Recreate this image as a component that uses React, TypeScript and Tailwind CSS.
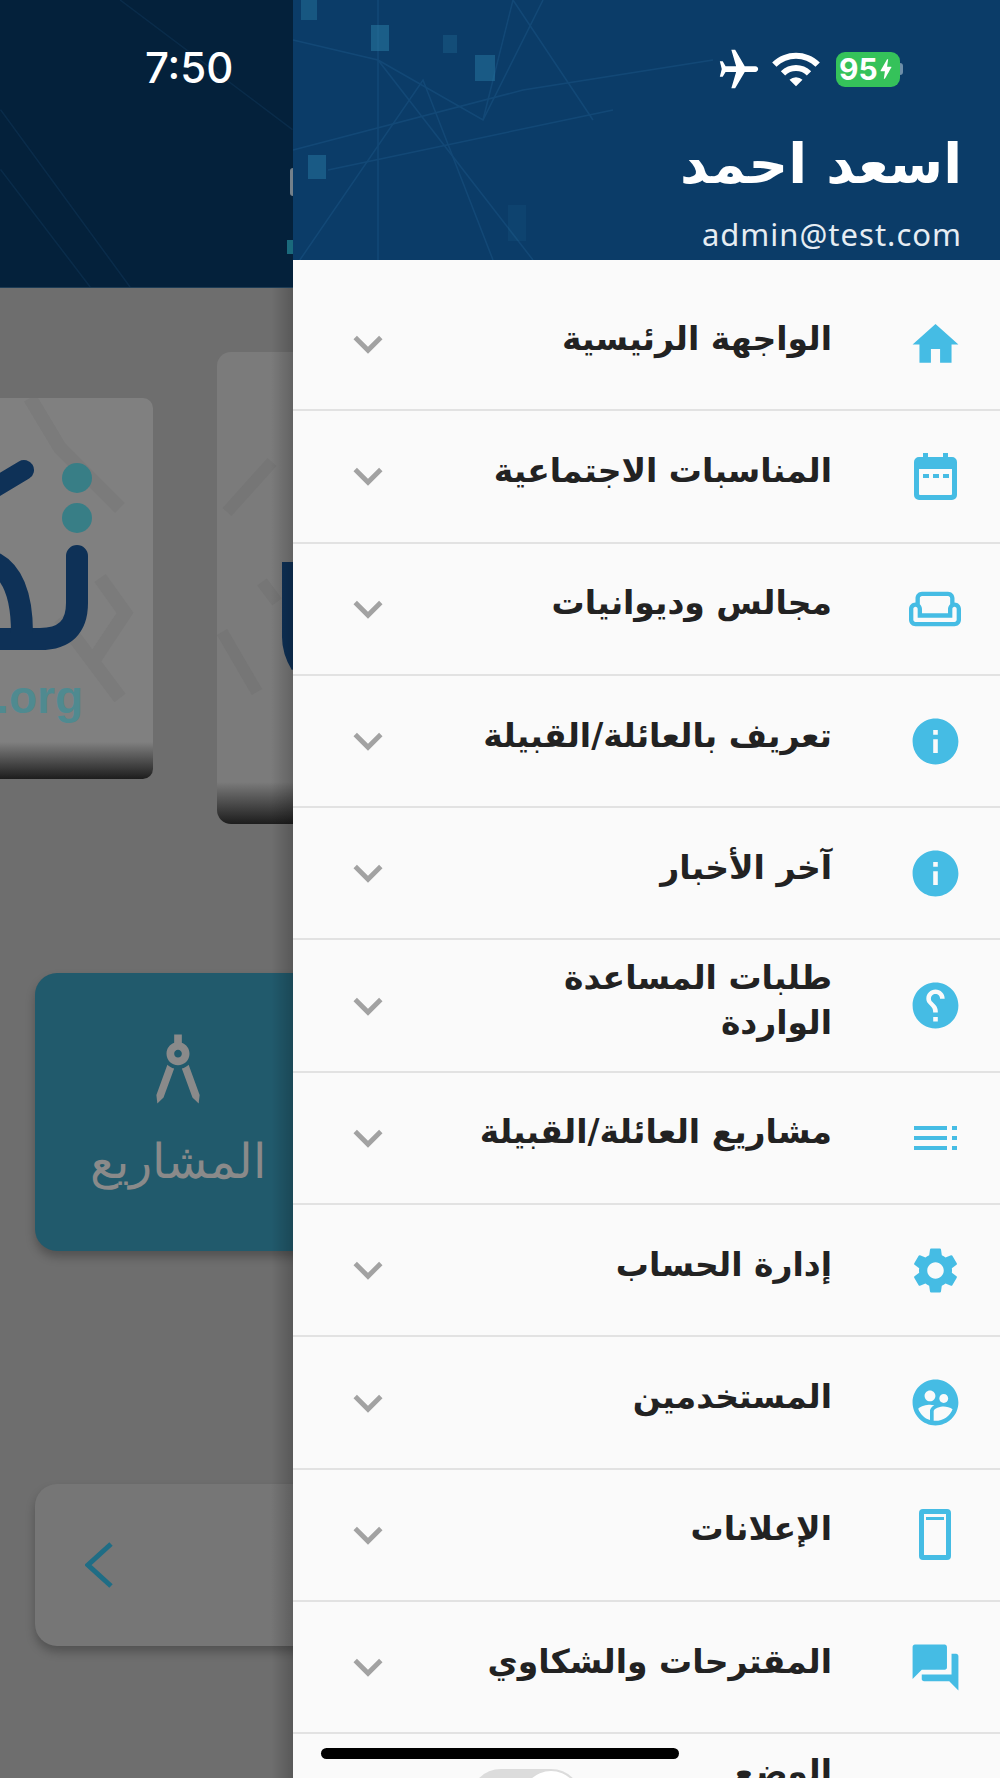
import type { ReactNode } from 'react';
import {
  MdHome,
  MdOutlineWeekend,
  MdInfo,
  MdHelp,
  MdSettings,
  MdSupervisedUserCircle,
  MdQuestionAnswer,
  MdArchitecture,
  MdAirplanemodeActive,
  MdWifi,
  MdBolt,
  MdKeyboardArrowDown,
} from 'react-icons/md';

function CalendarIcon() {
  return (
    <svg viewBox="0 0 43 47" className="w-[43px] h-[47px]" fill="#45bce4">
      <path fillRule="evenodd" d="M9 0h5v4h15V0h5v4h4a5 5 0 0 1 5 5v33a5 5 0 0 1-5 5H5a5 5 0 0 1-5-5V9a5 5 0 0 1 5-5h4zM5 16v25a1 1 0 0 0 1 1h31a1 1 0 0 0 1-1V16z" />
      <rect x="9" y="21" width="6" height="4" />
      <rect x="19" y="21" width="6" height="4" />
      <rect x="29" y="21" width="6" height="4" />
    </svg>
  );
}

function ListIcon() {
  return (
    <svg viewBox="0 0 43 24" className="w-[43px] h-[24px]" fill="#45bce4">
      <rect x="0" y="0" width="33" height="4" />
      <rect x="0" y="10" width="33" height="4" />
      <rect x="0" y="20" width="33" height="4" />
      <rect x="38" y="0" width="5" height="4" />
      <rect x="38" y="10" width="5" height="4" />
      <rect x="38" y="20" width="5" height="4" />
    </svg>
  );
}

function TabletIcon() {
  return (
    <svg viewBox="0 0 32 51" className="w-[32px] h-[51px]" fill="#45bce4">
      <path fillRule="evenodd" d="M4 0h24a4 4 0 0 1 4 4v43a4 4 0 0 1-4 4H4a4 4 0 0 1-4-4V4a4 4 0 0 1 4-4zM5 5v41h22V5z" />
      <rect x="7" y="8" width="18" height="3" />
    </svg>
  );
}

const ROWS: { label: string; icon: ReactNode }[] = [
  { label: 'الواجهة الرئيسية', icon: <MdHome size={55} color="#45bce4" /> },
  { label: 'المناسبات الاجتماعية', icon: <CalendarIcon /> },
  { label: 'مجالس وديوانيات', icon: <MdOutlineWeekend size={52} color="#45bce4" /> },
  { label: 'تعريف بالعائلة/القبيلة', icon: <MdInfo size={55} color="#45bce4" /> },
  { label: 'آخر الأخبار', icon: <MdInfo size={55} color="#45bce4" /> },
  { label: 'طلبات المساعدة\nالواردة', icon: <MdHelp size={55} color="#45bce4" className="-scale-x-100" /> },
  { label: 'مشاريع العائلة/القبيلة', icon: <ListIcon /> },
  { label: 'إدارة الحساب', icon: <MdSettings size={55} color="#45bce4" /> },
  { label: 'المستخدمين', icon: <MdSupervisedUserCircle size={55} color="#45bce4" /> },
  { label: 'الإعلانات', icon: <TabletIcon /> },
  { label: 'المقترحات والشكاوي', icon: <MdQuestionAnswer size={55} color="#45bce4" /> },
];

// network lines behind both headers
function HeaderPattern() {
  return (
    <svg viewBox="0 0 707 260" className="absolute inset-0 w-full h-full" fill="none">
      <g stroke="#2a6ea3" strokeWidth="1.5" opacity="0.25">
        <path d="M85 0 L85 260" />
        <path d="M0 40 L85 60 L190 120 L250 0" />
        <path d="M0 150 L230 90 L420 60" />
        <path d="M0 270 L130 80 L200 260" />
        <path d="M35 170 L320 110" />
        <path d="M85 60 L240 260" />
        <path d="M190 120 L220 0 L300 120" />
      </g>
      <g fill="#2b7fa8">
        <rect x="78" y="25" width="18" height="26" opacity="0.5" />
        <rect x="8" y="0" width="16" height="20" opacity="0.4" />
        <rect x="150" y="35" width="14" height="18" opacity="0.25" />
        <rect x="182" y="55" width="20" height="26" opacity="0.45" />
        <rect x="15" y="155" width="18" height="24" opacity="0.45" />
        <rect x="215" y="205" width="18" height="36" opacity="0.12" />
      </g>
    </svg>
  );
}

function LeftPanel() {
  return (
    <div className="relative w-[293px] shrink-0 h-full overflow-hidden bg-[#6e6e6e]">
      <div className="relative h-[288px] bg-[#04213b] border-b border-[#1d3c55] overflow-hidden">
        <svg viewBox="0 0 293 288" className="absolute inset-0 w-full h-full" fill="none">
          <path d="M0 110 L130 288 M0 170 L90 288 M120 0 L293 130" stroke="#0a2c4a" strokeWidth="1.5" />
        </svg>
        <span className="absolute left-[145px] top-[43px] text-[42px] leading-[50px] font-medium text-white font-['Inter',sans-serif]">7:50</span>
        <span className="absolute right-0 top-[168px] w-[3px] h-[28px] rounded-l-full bg-[#74808a]" />
        <span className="absolute right-0 top-[240px] w-[6px] h-[14px] bg-[#1a6a7c]" />
      </div>

      {/* carousel */}
      <div className="h-[600px] flex items-center gap-[64px]">
        <div className="relative shrink-0 w-[300px] h-[381px] -ml-[147px] rounded-[10px] overflow-hidden bg-[#808080]">
          <svg viewBox="0 0 153 381" className="absolute right-0 top-0 w-[153px] h-[381px]" fill="none">
            <path d="M30 0 L60 50 L120 110 M100 180 L125 215 L95 260 M60 220 L120 300" stroke="#7b7b7b" strokeWidth="14" />
            <circle cx="77" cy="80" r="15" fill="#387e86" />
            <circle cx="77" cy="120" r="15" fill="#387e86" />
            <path d="M-6 90 L24 72" stroke="#0e3157" strokeWidth="20" strokeLinecap="round" />
            <path d="M77 158 V205 Q77 241 40 241 H-10" stroke="#0e3157" strokeWidth="22" strokeLinecap="round" />
            <path d="M-5 165 Q22 180 22 235" stroke="#0e3157" strokeWidth="22" />
          </svg>
          <span className="absolute right-[70px] top-[273px] text-[46px] leading-[52px] font-bold text-[#4f8a90] font-['Liberation_Sans',sans-serif]">.org</span>
          <div className="absolute left-0 right-0 bottom-0 h-[37px] bg-gradient-to-b from-transparent to-[#1d1d1d]" />
        </div>
        <div className="relative shrink-0 w-[400px] h-[472px] rounded-[14px] overflow-hidden bg-[#7b7b7b]">
          <svg viewBox="0 0 76 472" className="absolute left-0 top-0 w-[76px] h-[472px]" fill="none">
            <path d="M10 160 L55 110 M5 280 L40 340 M60 250 L45 230" stroke="#767676" strokeWidth="12" />
            <path d="M71 210 V285 Q71 300 80 315" stroke="#0e3157" strokeWidth="12" />
          </svg>
          <div className="absolute left-0 right-0 bottom-0 h-[42px] bg-gradient-to-b from-transparent to-[#1d1d1d]" />
        </div>
      </div>

      <div className="h-[596px] pt-[85px] pl-[35px]">
        <div className="w-[286px] h-[278px] rounded-[22px] bg-[#215a6c] shadow-[0_6px_10px_rgba(0,0,0,0.25)] flex flex-col items-center pt-[50px]">
          <MdArchitecture size={92} color="#8a8a8a" />
          <span dir="rtl" className="mt-[14px] text-[48px] leading-[64px] text-[#8a8a8a] font-['DejaVu_Sans',sans-serif] font-light">المشاريع</span>
        </div>
        <div className="w-[286px] h-[162px] mt-[233px] rounded-[22px] bg-[#767676] shadow-[0_6px_10px_rgba(0,0,0,0.25)] flex items-center pl-[50px]">
          <svg viewBox="0 0 28 46" className="w-[28px] h-[46px]" fill="none">
            <path d="M26 2 L3 23 L26 44" stroke="#1f6d85" strokeWidth="5" />
          </svg>
        </div>
      </div>

      {/* drawer shadow */}
      <div className="absolute right-0 top-[288px] bottom-0 w-[22px] bg-gradient-to-r from-transparent to-black/20" />
    </div>
  );
}

function DrawerRow({ label, icon }: { label: string; icon: ReactNode }) {
  return (
    <div className="h-[132.3px] shrink-0 border-b-2 border-[#e2e2e2] flex items-center pr-[35px] pl-[46px]">
      <div className="w-[60px] shrink-0 flex items-center justify-center">{icon}</div>
      <div className="flex-1 pr-[73px] pl-[20px] -mt-[12px] text-[33px] leading-[45px] font-bold text-[#222] whitespace-pre-line">{label}</div>
      <MdKeyboardArrowDown size={58} color="#a2a2a2" className="shrink-0" />
    </div>
  );
}

export default function App() {
  return (
    <div className="relative flex w-[1000px] h-[1778px] overflow-hidden font-['DejaVu_Sans',sans-serif]">
      <LeftPanel />

      <div dir="rtl" className="flex-1 h-full flex flex-col bg-[#fafafa]">
        <div dir="ltr" className="relative h-[260px] shrink-0 bg-[#0b3c68] overflow-hidden">
          <HeaderPattern />
          <div className="absolute left-[423px] top-[43px] flex items-center">
            <MdAirplanemodeActive size={46} color="#fff" className="rotate-90" />
            <MdWifi size={52} color="#fff" className="ml-[8px]" />
            <div className="ml-[14px] w-[64px] h-[35px] rounded-[9px] bg-[#35c25a] flex items-center pl-[3px] text-[30px] leading-none font-bold text-white font-['Inter',sans-serif]">
              95
              <MdBolt size={26} color="#fff" className="-ml-[5px] shrink-0" />
            </div>
            <span className="w-[3px] h-[12px] rounded-r-full bg-[#6d8ea8]" />
          </div>
          <div className="absolute right-[38px] top-[130px] text-right">
            <div dir="rtl" className="text-[55px] leading-[68px] font-bold text-white">اسعد احمد</div>
            <div className="mt-[18px] text-[31px] leading-[36px] tracking-[1px] text-[#e6edf3] font-['Noto_Sans',sans-serif]">admin@test.com</div>
          </div>
        </div>

        <div className="pt-[19px] flex flex-col">
          {ROWS.map((row, i) => (
            <DrawerRow key={i} label={row.label} icon={row.icon} />
          ))}
          <div className="h-[132.3px] shrink-0 flex items-center pr-[35px] pl-[177px]">
            <div className="w-[60px] shrink-0" />
            <div className="flex-1 pr-[73px] -mt-[12px] text-[33px] leading-[45px] font-bold text-[#222] whitespace-pre-line">{'الوضع\nالليلي'}</div>
            <div dir="ltr" className="w-[112px] h-[62px] rounded-full bg-[#dcdcdc] flex justify-end items-center p-[2px] shrink-0">
              <div className="w-[58px] h-[58px] rounded-full bg-white shadow-md" />
            </div>
          </div>
        </div>
      </div>

      {/* home indicator */}
      <div className="absolute left-[321px] top-[1748px] w-[358px] h-[11px] rounded-full bg-black" />
    </div>
  );
}
